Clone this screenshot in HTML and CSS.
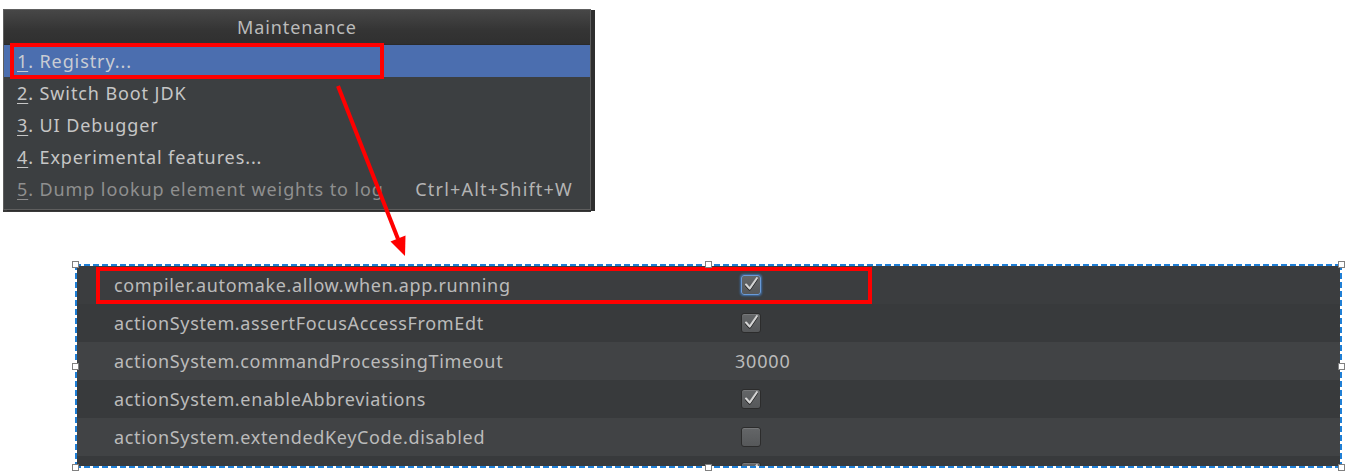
FILE: index.html
```html
<!DOCTYPE html>
<html>
<head>
<meta charset="utf-8">
<link rel="stylesheet" href="styles.css">
</head>
<body>
<div class="page">
  <div class="menu">
    <div class="menu-title">Maintenance</div>
    <div class="item selected"><span class="label"><u>1</u>. Registry...</span><span class="mark mark-menu"></span></div>
    <div class="item"><span class="label"><u>2</u>. Switch Boot JDK</span></div>
    <div class="item"><span class="label"><u>3</u>. UI Debugger</span></div>
    <div class="item"><span class="label"><u>4</u>. Experimental features...</span></div>
    <div class="item disabled"><span class="label"><u>5</u>. Dump lookup element weights to log</span><span class="shortcut">Ctrl+Alt+Shift+W</span></div>
  </div>

  <div class="registry">
    <div class="table">
      <div class="row r-first">
        <span class="name">compiler.automake.allow.when.app.running</span>
        <span class="value"><span class="cb checked focus"><svg viewBox="0 0 20 20"><path class="sh" d="M4.5 10.5 L8.5 15 L16.5 3.5"/><path class="ck" d="M4.5 9.5 L8.5 14 L16.5 2.5"/></svg></span></span>
        <span class="mark mark-row"></span>
      </div>
      <div class="row r-dark">
        <span class="name">actionSystem.assertFocusAccessFromEdt</span>
        <span class="value"><span class="cb checked"><svg viewBox="0 0 20 20"><path class="sh" d="M4.5 10.5 L8.5 15 L16.5 3.5"/><path class="ck" d="M4.5 9.5 L8.5 14 L16.5 2.5"/></svg></span></span>
      </div>
      <div class="row r-light">
        <span class="name">actionSystem.commandProcessingTimeout</span>
        <span class="value"><span class="num">30000</span></span>
      </div>
      <div class="row r-dark">
        <span class="name">actionSystem.enableAbbreviations</span>
        <span class="value"><span class="cb checked"><svg viewBox="0 0 20 20"><path class="sh" d="M4.5 10.5 L8.5 15 L16.5 3.5"/><path class="ck" d="M4.5 9.5 L8.5 14 L16.5 2.5"/></svg></span></span>
      </div>
      <div class="row r-light">
        <span class="name">actionSystem.extendedKeyCode.disabled</span>
        <span class="value"><span class="cb"></span></span>
      </div>
      <div class="row r-dark r-partial">
        <span class="name"></span>
        <span class="value"><span class="cb checked"><svg viewBox="0 0 20 20"><path class="sh" d="M4.5 10.5 L8.5 15 L16.5 3.5"/><path class="ck" d="M4.5 9.5 L8.5 14 L16.5 2.5"/></svg></span></span>
      </div>
    </div>
    <span class="handle h-tl"></span>
    <span class="handle h-tm"></span>
    <span class="handle h-tr"></span>
    <span class="handle h-ml"></span>
    <span class="handle h-mr"></span>
    <span class="handle h-bl"></span>
    <span class="handle h-bm"></span>
    <span class="handle h-br"></span>
  </div>

  <svg class="arrow" width="1348" height="476" viewBox="0 0 1348 476">
    <line x1="338" y1="86" x2="398" y2="239" stroke="#ff0000" stroke-width="4"/>
    <polygon points="405,256 390.5,241.5 405.5,235.5" fill="#ff0000"/>
  </svg>
</div>
</body>
</html>
```

FILE: styles.css
```css
html, body {
  margin: 0;
  padding: 0;
  background: #ffffff;
}

.page {
  position: relative;
  width: 1348px;
  height: 476px;
  padding-top: 9px;
  box-sizing: border-box;
  font-family: "Noto Sans", "Open Sans", sans-serif;
  overflow: hidden;
}

/* ---------- popup menu ---------- */
.menu {
  margin-left: 3px;
  width: 588px;
  box-sizing: border-box;
  background: #3c3f41;
  border: 1px solid #5e5e5e;
  box-shadow: 4px 1px 0 #2e2e2e, 0 2px 0 #3a3a3a;
  padding-bottom: 4px;
}

.menu-title {
  height: 34px;
  line-height: 34px;
  border-bottom: 1px solid #2a2a2a;
  text-align: center;
  color: #bbbbbb;
  font-size: 18px;
  letter-spacing: 0.9px;
  background: linear-gradient(#474747, #343434 60%, #303030);
}

.item {
  position: relative;
  display: flex;
  justify-content: space-between;
  align-items: center;
  height: 32px;
  padding: 0 17px 0 13px;
  color: #c6c6c6;
  font-size: 18px;
  letter-spacing: 0.9px;
  white-space: nowrap;
}

.item u {
  text-decoration-thickness: 1px;
  text-underline-offset: 3px;
}

.item.selected {
  background: #4b6eaf;
  color: #c9ccd3;
}

.item.disabled .label {
  color: #8f8f8f;
}

.shortcut {
  color: #b4b4b4;
  letter-spacing: 1.2px;
}

.mark {
  position: absolute;
  border: 4px solid #ff0000;
  box-sizing: border-box;
}

.mark-menu {
  left: 6px;
  top: -2px;
  width: 374px;
  height: 36px;
}

/* ---------- registry table ---------- */
.registry {
  position: relative;
  margin: 54px 0 0 75px;
  width: 1267px;
  height: 204px;
  padding: 2px;
  box-sizing: border-box;
}

.registry::before {
  content: "";
  position: absolute;
  inset: 0;
  background:
    repeating-linear-gradient(90deg, #1f7fd6 0 6px, transparent 6px 9px) top left / 100% 2px no-repeat,
    repeating-linear-gradient(90deg, #1f7fd6 0 6px, transparent 6px 9px) bottom left / 100% 2px no-repeat,
    repeating-linear-gradient(180deg, #1f7fd6 0 6px, transparent 6px 9px) top left / 2px 100% no-repeat,
    repeating-linear-gradient(180deg, #1f7fd6 0 6px, transparent 6px 9px) top right / 2px 100% no-repeat;
}

.table {
  height: 200px;
  overflow: hidden;
  background: #393b3d;
}

.row {
  position: relative;
  display: flex;
  align-items: center;
  height: 38px;
  color: #bbbbbb;
  font-size: 18px;
  letter-spacing: 0.65px;
  white-space: nowrap;
}

.r-first { background: #3b3d3f; }
.r-dark { background: #383a3c; }
.r-light { background: #414345; }

.r-partial {
  align-items: flex-start;
  padding-top: 6px;
  box-sizing: border-box;
}

.name {
  width: 619px;
  padding-left: 37px;
  flex: none;
}

.value {
  display: flex;
  align-items: center;
}

.num {
  color: #bbbbbb;
  margin-left: 2px;
  letter-spacing: 0.8px;
}

.cb {
  display: block;
  width: 20px;
  height: 20px;
  margin-left: 8px;
  box-sizing: border-box;
  border: 1px solid #2c2c2c;
  border-radius: 3px;
  background: linear-gradient(#646668, #56585a);
  box-shadow: inset 0 1px 0 rgba(255, 255, 255, 0.12);
}

.cb svg {
  display: block;
  width: 18px;
  height: 18px;
  overflow: visible;
}

.cb .sh {
  fill: none;
  stroke: #1a1a1a;
  stroke-width: 2.6;
  stroke-linecap: round;
  stroke-linejoin: round;
}

.cb .ck {
  fill: none;
  stroke: #d4d4d4;
  stroke-width: 2.4;
  stroke-linecap: round;
  stroke-linejoin: round;
}

.cb.focus {
  border-color: #6a9ad6;
  box-shadow: 0 0 2px 1px #3f6fa8;
}

.mark-row {
  left: 19px;
  top: 1px;
  width: 776px;
  height: 37px;
}

/* selection handles */
.handle {
  position: absolute;
  width: 7px;
  height: 7px;
  box-sizing: border-box;
  background: #ffffff;
  border: 1px solid #808080;
  z-index: 2;
}

.h-tl { left: -3px; top: -3px; }
.h-tm { left: 630px; top: -3px; }
.h-tr { right: -3px; top: -3px; }
.h-ml { left: -3px; top: 99px; }
.h-mr { right: -3px; top: 99px; }
.h-bl { left: -3px; bottom: -3px; }
.h-bm { left: 630px; bottom: -3px; }
.h-br { right: -3px; bottom: -3px; }

/* annotation arrow */
.arrow {
  position: absolute;
  left: 0;
  top: 0;
  pointer-events: none;
}
```
